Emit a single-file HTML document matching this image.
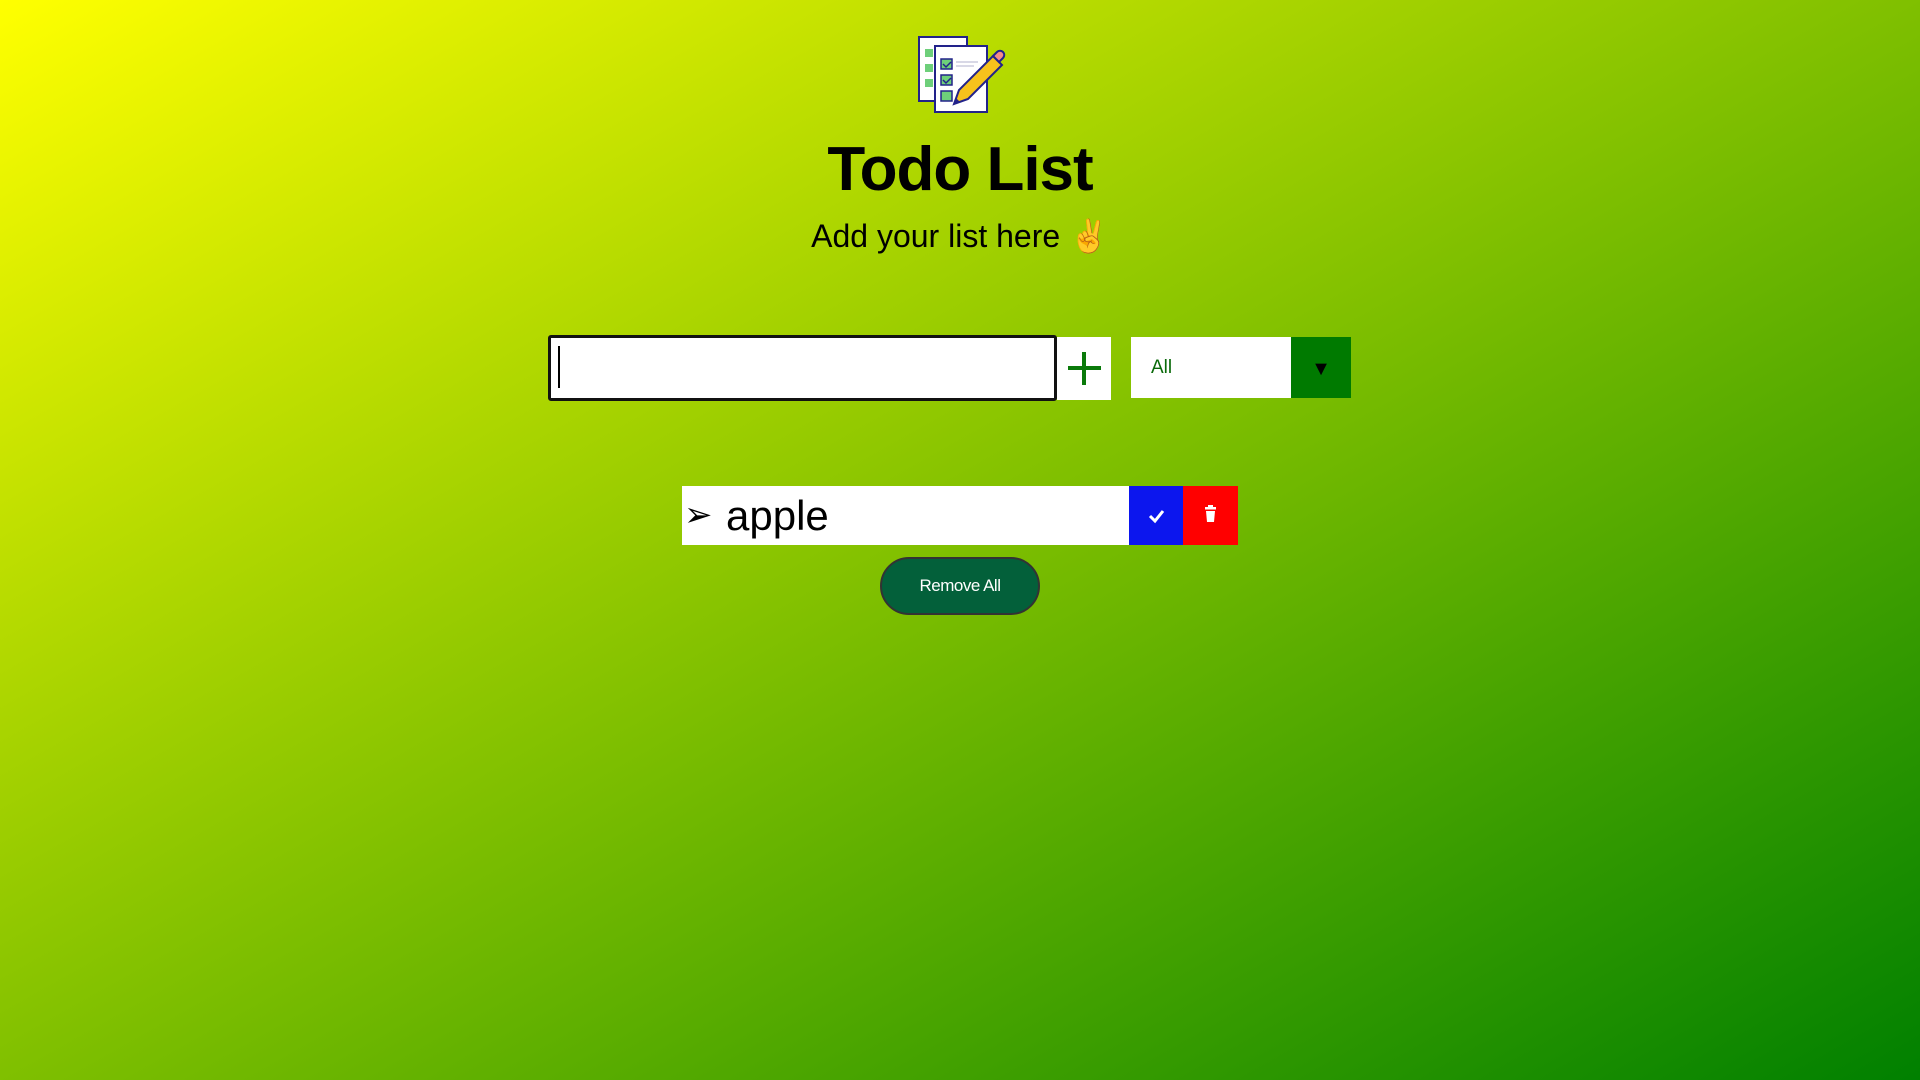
<!DOCTYPE html>
<html><head><meta charset="utf-8"><style>
*{margin:0;padding:0;box-sizing:border-box}
body{width:1920px;height:1080px;overflow:hidden;background:linear-gradient(to bottom right,#ffff00,#008000);font-family:"Liberation Sans",sans-serif;position:relative}
.abs{position:absolute}
h1{position:absolute;left:0;width:1920px;text-align:center;top:134px;font-size:62px;font-weight:bold;color:#000;letter-spacing:-1px}
.sub{position:absolute;left:0;width:1920px;text-align:center;top:217px;font-size:32px;color:#000}
</style></head><body>
<svg class="abs" style="left:916px;top:36px" width="90" height="78" viewBox="0 0 90 78">
<rect x="3" y="1" width="48" height="64" fill="#fff" stroke="#22228a" stroke-width="2"/>
<rect x="9" y="13" width="8" height="8" fill="#6ecf7a"/><rect x="9" y="28" width="8" height="8" fill="#6ecf7a"/><rect x="9" y="43" width="8" height="8" fill="#6ecf7a"/>
<rect x="19" y="10" width="52" height="66" fill="#fff" stroke="#22228a" stroke-width="2"/>
<rect x="25" y="23" width="11" height="10" fill="#6ecf7a" stroke="#22228a" stroke-width="1.5"/>
<rect x="25" y="39" width="11" height="10" fill="#6ecf7a" stroke="#22228a" stroke-width="1.5"/>
<rect x="25" y="55" width="11" height="10" fill="#6ecf7a" stroke="#22228a" stroke-width="1.5"/>
<path d="M27 28l3 3 5-5M27 44l3 3 5-5" stroke="#22228a" stroke-width="1.5" fill="none"/>
<path d="M40 26h22M40 30h18" stroke="#ccd" stroke-width="1.5"/>
<path d="M38 68l5-14 34-34 9 9-34 34z" fill="#f7c21c" stroke="#22228a" stroke-width="2"/>
<path d="M77 20l4-4a4 4 0 0 1 6 6l-4 4z" fill="#f58a8a" stroke="#22228a" stroke-width="2"/>
<path d="M38 68l2-6 4 4z" fill="#22228a"/>
</svg>
<h1>Todo List</h1>
<div class="sub">Add your list here ✌️</div>
<div class="abs" style="left:548px;top:335px;width:509px;height:66px;background:#fff;border:3px solid #111;border-radius:3px"></div>
<div class="abs" style="left:558px;top:346px;width:2px;height:42px;background:#000"></div>
<div class="abs" style="left:1057px;top:337px;width:54px;height:63px;background:#fff"></div>
<div class="abs" style="left:1068px;top:366px;width:33px;height:4px;background:#0a7a0a"></div>
<div class="abs" style="left:1082px;top:352px;width:4px;height:33px;background:#0a7a0a"></div>
<div class="abs" style="left:1131px;top:337px;width:160px;height:61px;background:#fff;color:#0a6a0a;font-size:19px;line-height:61px;padding-left:20px">All</div>
<div class="abs" style="left:1291px;top:337px;width:60px;height:61px;background:#007a00;color:#000;font-size:20px;text-align:center;line-height:64px">▼</div>
<div class="abs" style="left:682px;top:486px;width:447px;height:59px;background:#fff;color:#000"></div>
<div class="abs" style="left:684px;top:486px;height:59px;font-size:34px;line-height:59px;color:#000">➢</div>
<div class="abs" style="left:726px;top:486px;height:59px;font-size:42px;line-height:59px;color:#000">apple</div>
<div class="abs" style="left:1129px;top:486px;width:54px;height:59px;background:#0c16ee"><svg width="54" height="59"><path d="M21 30l5 5 8-10" stroke="#fff" stroke-width="3" fill="none"/></svg></div>
<div class="abs" style="left:1183px;top:486px;width:55px;height:59px;background:#ff0000"><svg width="55" height="59"><rect x="22" y="21" width="11" height="2.5" fill="#fff"/><rect x="25" y="19" width="5" height="2" fill="#fff"/><path d="M23 25h9l-1 11h-7z" fill="#fff"/></svg></div>
<div class="abs" style="left:880px;top:557px;width:160px;height:58px;background:#03603a;border:2px solid #333;border-radius:29px;color:#fff;font-size:17px;text-align:center;line-height:54px;letter-spacing:-0.5px">Remove All</div>
</body></html>
